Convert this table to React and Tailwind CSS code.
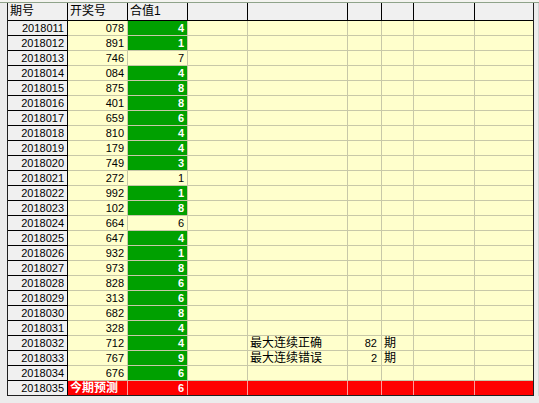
const rows = [
  ["2018011", "078", "4", true],
  ["2018012", "891", "1", true],
  ["2018013", "746", "7", false],
  ["2018014", "084", "4", true],
  ["2018015", "875", "8", true],
  ["2018016", "401", "8", true],
  ["2018017", "659", "6", true],
  ["2018018", "810", "4", true],
  ["2018019", "179", "4", true],
  ["2018020", "749", "3", true],
  ["2018021", "272", "1", false],
  ["2018022", "992", "1", true],
  ["2018023", "102", "8", true],
  ["2018024", "664", "6", false],
  ["2018025", "647", "4", true],
  ["2018026", "932", "1", true],
  ["2018027", "973", "8", true],
  ["2018028", "828", "6", true],
  ["2018029", "313", "6", true],
  ["2018030", "682", "8", true],
  ["2018031", "328", "4", true],
  ["2018032", "712", "4", true],
  ["2018033", "767", "9", true],
  ["2018034", "676", "6", true],
];

const stats = {
  "2018032": ["最大连续正确", "82", "期"],
  "2018033": ["最大连续错误", "2", "期"],
};

// Liberation Sans first keeps line boxes small; CJK glyphs fall through to Noto
const font = "font-['Liberation_Sans','Noto_Sans_CJK_SC',sans-serif]";

function Blank({ w, red }) {
  return (
    <div
      className={`${w} h-full shrink-0 border-r ${
        red ? "border-[#ff9a9a] bg-[#ff0000]" : "border-[#c8c8a8] bg-[#ffffcc]"
      }`}
    />
  );
}

export default function App() {
  return (
    <div className={`w-[539px] h-[403px] bg-[#ececec] overflow-hidden ${font}`}>
      <div className="h-[2px] bg-[#f4f4f0]" />
      <div className="h-px bg-[#8fa38a]" />
      <div className="flex">
        <div className="w-[7px] shrink-0" />
        <div className="w-[527px] border-l border-r border-b border-[#202020]">
          {/* Header */}
          <div className="flex h-[18px] bg-[#f0f0f0] border-b border-black text-[12px] leading-[16px] text-black">
            <div className="w-[60px] shrink-0 border-r border-black pl-[2px]">期号</div>
            <div className="w-[60px] shrink-0 border-r border-black pl-[2px]">开奖号</div>
            <div className="w-[60px] shrink-0 border-r border-black pl-[2px]">合值1</div>
            <div className="w-[60px] shrink-0 border-r border-black" />
            <div className="w-[100px] shrink-0 border-r border-black" />
            <div className="w-[34px] shrink-0 border-r border-black" />
            <div className="w-[32px] shrink-0 border-r border-black" />
            <div className="w-[61px] shrink-0 border-r border-black" />
            <div className="w-[58px] shrink-0" />
          </div>

          {rows.map(([id, num, val, green]) => {
            const s = stats[id];
            return (
              <div key={id} className="flex h-[15px] text-[11px] leading-[14px]">
                <div className="w-[60px] shrink-0 border-r border-b border-r-black border-b-black bg-[#f0f0f0] text-right pr-[3px] text-black">
                  {id}
                </div>
                <div className="w-[60px] shrink-0 border-r border-b border-[#c8c8a8] bg-[#ffffcc] text-right pr-[3px] text-black">
                  {num}
                </div>
                <div
                  className={`w-[60px] shrink-0 border-r border-b text-right pr-[3px] ${
                    green
                      ? "bg-[#00a000] border-[#c8c8a8] text-white font-bold"
                      : "bg-[#ffffcc] border-[#c8c8a8] text-black"
                  }`}
                >
                  {val}
                </div>
                <div className="w-[60px] shrink-0 border-r border-b border-[#c8c8a8] bg-[#ffffcc]" />
                <div className="w-[100px] shrink-0 border-r border-b border-[#c8c8a8] bg-[#ffffcc] pl-[2px] text-[12px] leading-[14px] text-black">
                  {s ? s[0] : ""}
                </div>
                <div className="w-[34px] shrink-0 border-r border-b border-[#c8c8a8] bg-[#ffffcc] text-right pr-[4px] text-black">
                  {s ? s[1] : ""}
                </div>
                <div className="w-[32px] shrink-0 border-r border-b border-[#c8c8a8] bg-[#ffffcc] pl-[2px] text-[12px] leading-[14px] text-black">
                  {s ? s[2] : ""}
                </div>
                <div className="w-[61px] shrink-0 border-r border-b border-[#c8c8a8] bg-[#ffffcc]" />
                <div className="w-[58px] shrink-0 border-b border-[#c8c8a8] bg-[#ffffcc]" />
              </div>
            );
          })}

          {/* Prediction row */}
          <div className="flex h-[14px] text-[11px] leading-[14px]">
            <div className="w-[60px] shrink-0 border-r border-black bg-[#f0f0f0] text-right pr-[3px] text-black">
              2018035
            </div>
            <div className="w-[60px] shrink-0 border-r border-[#ff9a9a] bg-[#ff0000] pl-[2px] text-[12px] leading-[14px] font-bold text-white">
              今期预测
            </div>
            <div className="w-[60px] shrink-0 border-r border-[#ff9a9a] bg-[#ff0000] text-right pr-[3px] font-bold text-white">
              6
            </div>
            <Blank w="w-[60px]" red />
            <Blank w="w-[100px]" red />
            <Blank w="w-[34px]" red />
            <Blank w="w-[32px]" red />
            <Blank w="w-[61px]" red />
            <div className="w-[58px] h-full shrink-0 bg-[#ff0000]" />
          </div>
        </div>
        <div className="w-[5px] shrink-0 border-r border-[#d4d4d4]" />
      </div>
    </div>
  );
}
